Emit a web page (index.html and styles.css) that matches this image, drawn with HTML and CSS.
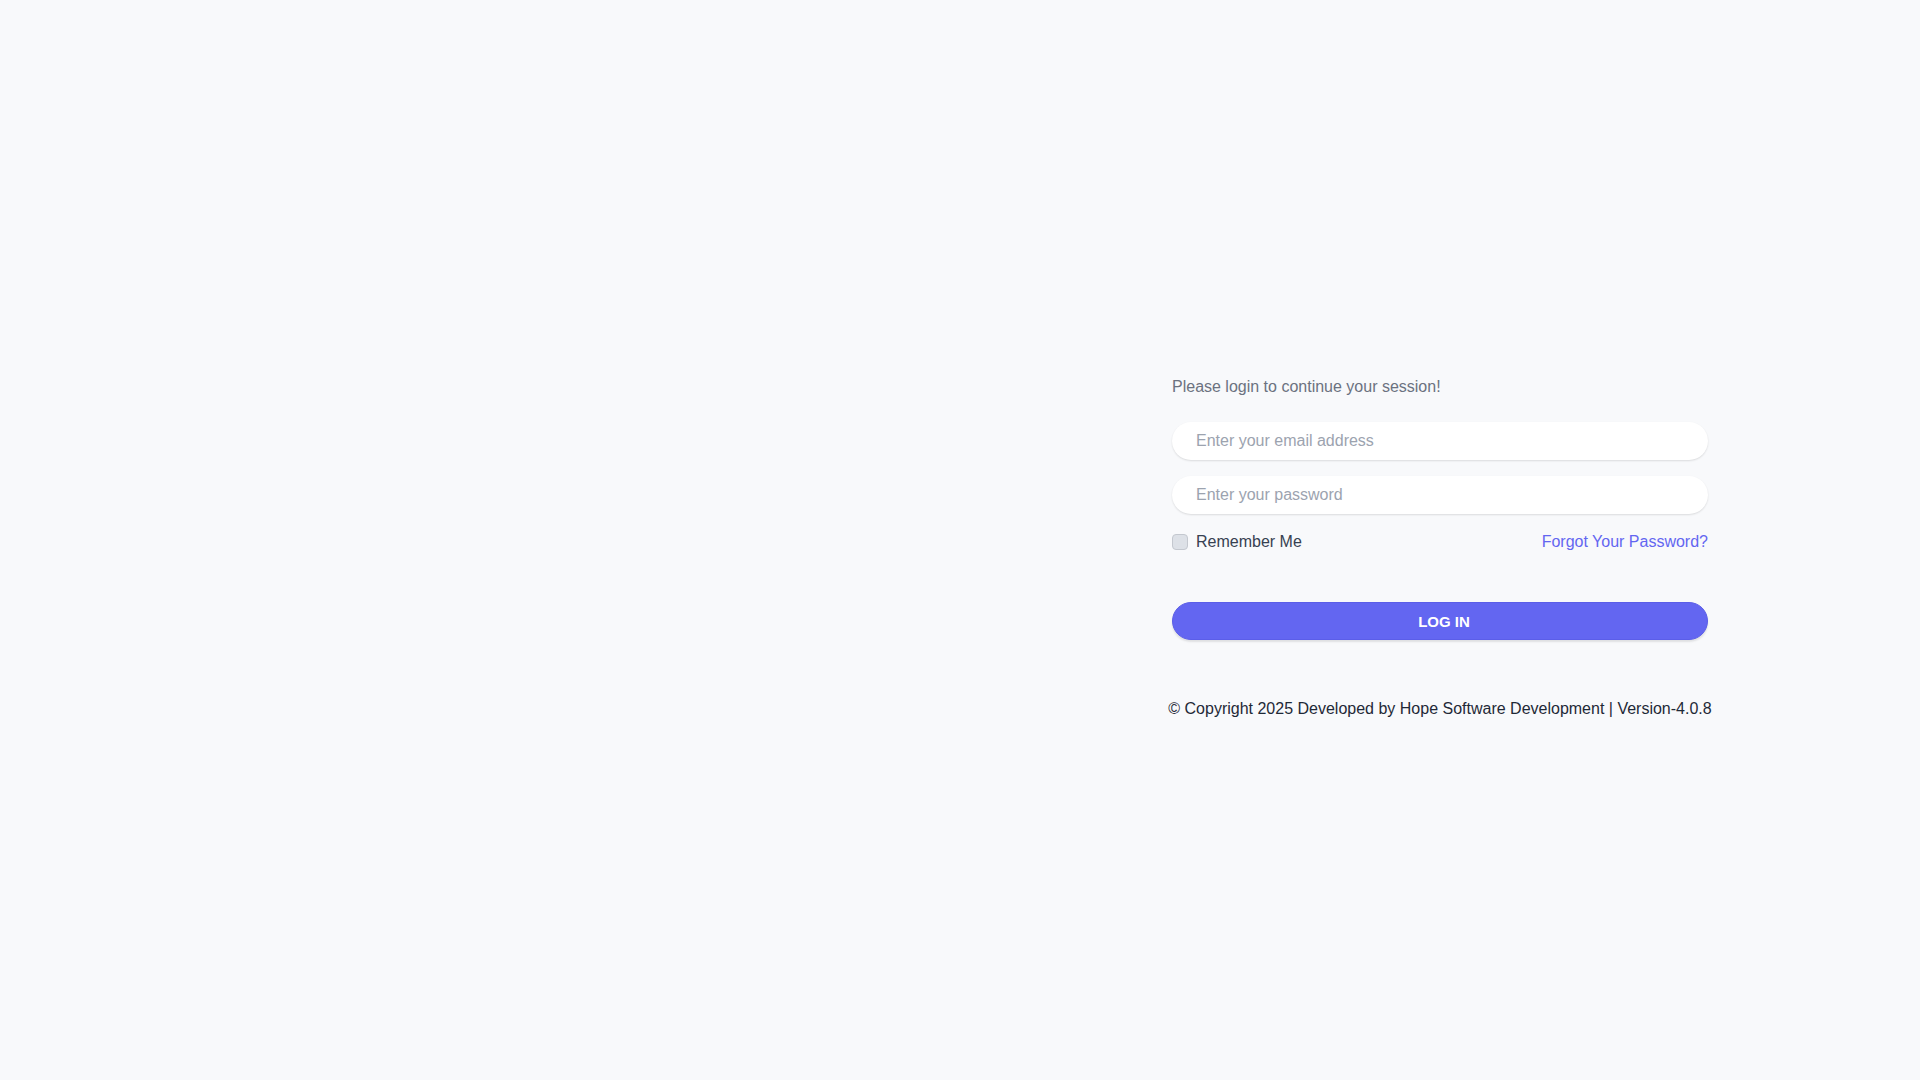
FILE: index.html
```html
<!DOCTYPE html>
<html lang="en">
<head>
<meta charset="utf-8">
<title>Login</title>
<link rel="stylesheet" href="styles.css">
</head>
<body>
<div class="page">
  <div class="side"></div>
  <div class="main">
    <div class="panel">
      <p class="lead">Please login to continue your session!</p>
      <form class="form">
        <input class="field" type="email" placeholder="Enter your email address">
        <input class="field" type="password" placeholder="Enter your password">
        <div class="row">
          <label class="remember"><span class="box"></span><span>Remember Me</span></label>
          <a class="forgot" href="#">Forgot Your Password?</a>
        </div>
        <button class="btn" type="button">LOG IN</button>
      </form>
      <p class="copy">© Copyright 2025 Developed by Hope Software Development | Version-4.0.8</p>
    </div>
  </div>
</div>
</body>
</html>
```
FILE: styles.css
```css
* { box-sizing: border-box; }
html, body { margin: 0; padding: 0; }
body {
  background: #f8f9fb;
  font-family: "Liberation Sans", Arial, sans-serif;
  font-size: 16px;
  line-height: 24px;
  color: #374151;
}
.page {
  display: grid;
  grid-template-columns: 960px 960px;
  height: 1080px;
}
.main {
  display: flex;
  justify-content: center;
  align-items: flex-start;
  padding-top: 375px;
}
.panel {
  width: 536px;
  display: flex;
  flex-direction: column;
  align-items: stretch;
}
.lead {
  margin: 0;
  color: #6b7280;
}
.form {
  margin-top: 23px;
  display: flex;
  flex-direction: column;
}
.field {
  height: 38px;
  border: 0;
  border-radius: 19px;
  background: #ffffff;
  box-shadow: 0 1px 2px rgba(0, 0, 0, 0.12);
  padding: 0 24px;
  font-family: inherit;
  font-size: 16px;
  color: #374151;
  outline: none;
}
.field + .field { margin-top: 16px; }
.field::placeholder { color: #9ca3af; }
.row {
  margin-top: 16px;
  display: flex;
  justify-content: space-between;
  align-items: center;
  height: 24px;
}
.remember {
  display: flex;
  align-items: center;
  gap: 8px;
  color: #374151;
}
.box {
  width: 16px;
  height: 16px;
  border-radius: 4px;
  border: 1px solid #c4c8cf;
  background: #dde1e7;
}
.forgot {
  color: #6366f1;
  text-decoration: none;
}
.btn {
  margin-top: 48px;
  height: 38px;
  border: 1px solid #5b5ee8;
  border-radius: 19px;
  background: #6366f1;
  color: #ffffff;
  font-family: inherit;
  font-size: 15px;
  font-weight: 700;
  padding: 0 0 0 8px;
  box-shadow: 0 2px 2px rgba(0, 0, 0, 0.1);
}
.copy {
  margin: 57px -20px 0;
  text-align: center;
  white-space: nowrap;
  color: #1f2937;
}
```
